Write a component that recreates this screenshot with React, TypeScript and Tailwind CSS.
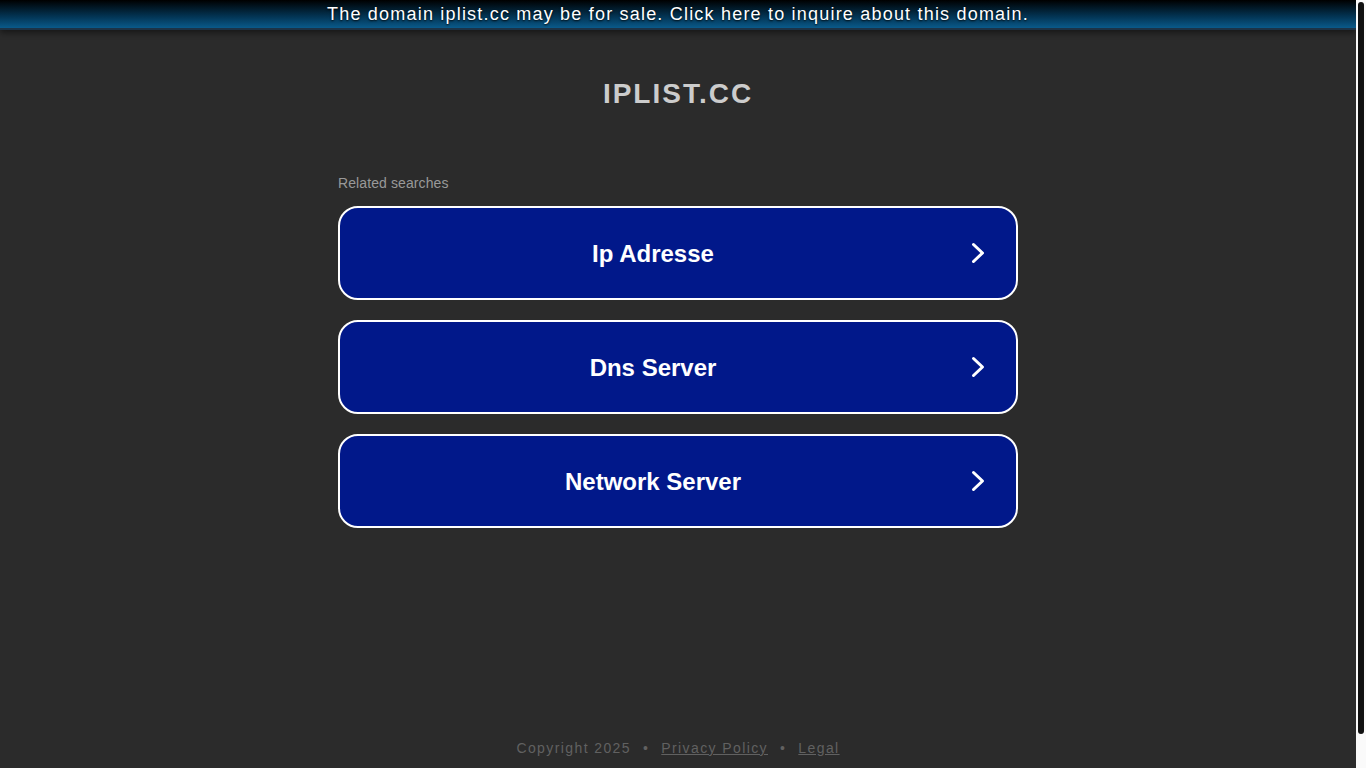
import React from "react";

const items = ["Ip Adresse", "Dns Server", "Network Server"];

function Chevron() {
  return (
    <svg width="24" height="24" viewBox="0 0 24 24" className="mr-[26px] shrink-0" fill="none">
      <polyline points="7.5,3.5 16.5,12 7.5,20.5" stroke="#ffffff" strokeWidth="3" strokeLinecap="round" strokeLinejoin="round" />
    </svg>
  );
}

export default function App() {
  return (
    <div className="h-screen flex overflow-hidden bg-[#2b2b2b] font-['Liberation_Sans',Arial,sans-serif]">
      <div className="flex-1 min-w-0 flex flex-col">
        <div className="h-[30px] shrink-0 bg-[linear-gradient(to_bottom,#000000_0%,#033555_60%,#0a5a8a_100%)] border-b-2 border-[#1c3347] shadow-[0_3px_6px_rgba(0,0,0,0.45)] text-center">
          <span className="text-[18px] leading-[28px] text-white tracking-[1.2px] [text-shadow:0_1px_2px_rgba(0,0,0,0.9)] cursor-pointer">
            The domain iplist.cc may be for sale. Click here to inquire about this domain.
          </span>
        </div>
        <h1 className="mt-[48px] text-center text-[28px] leading-[32px] font-bold text-[#cccccc] tracking-[2px]">
          IPLIST.CC
        </h1>
        <div className="w-[680px] mx-auto mt-[65px]">
          <div className="text-[14px] leading-[16px] text-[#999999] tracking-[0.1px]">Related searches</div>
          <div className="mt-[15px] flex flex-col gap-[20px]">
            {items.map((t) => (
              <div
                key={t}
                className="h-[94px] flex items-center rounded-[20px] border-2 border-white bg-[#01188a] cursor-pointer"
              >
                <span className="flex-1 text-center text-[24px] font-bold text-white leading-[28px] mt-[2px]">{t}</span>
                <Chevron />
              </div>
            ))}
          </div>
        </div>
        <div className="mt-[212px] text-center text-[14px] leading-[16px] text-[#616161] tracking-[1.4px]">
          <span>Copyright 2025</span>
          <span className="mx-[12px]">•</span>
          <a className="underline text-[#616161]" href="#">Privacy Policy</a>
          <span className="mx-[12px]">•</span>
          <a className="underline text-[#616161]" href="#">Legal</a>
        </div>
      </div>
      <div className="w-[10px] shrink-0 bg-[#fafafa] pt-[2px] pl-[2px]">
        <div className="w-[6px] h-[732px] rounded-[3px] bg-[#111111]"></div>
      </div>
    </div>
  );
}
